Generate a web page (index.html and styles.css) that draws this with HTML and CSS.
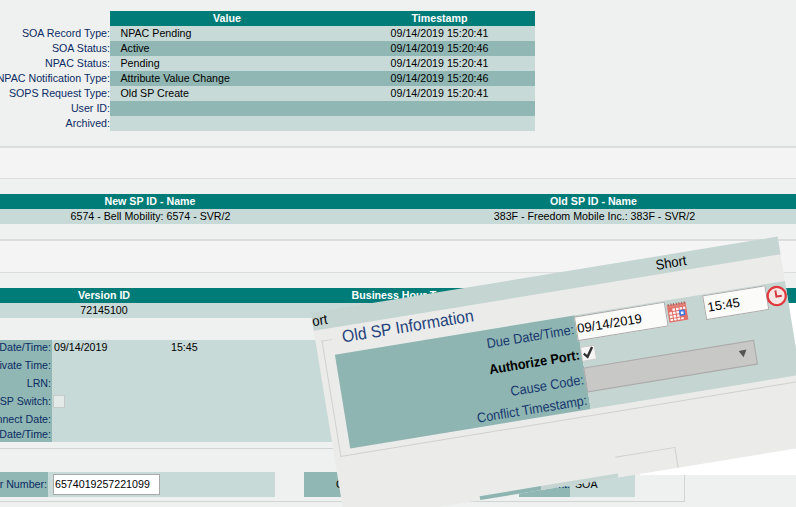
FILE: index.html
```html
<!DOCTYPE html>
<html lang="en">
<head>
<meta charset="utf-8">
<title>SOA Record</title>
<link rel="stylesheet" href="styles.css">
</head>
<body>
<main class="page">
  <section class="status">
    <div class="status-row head"><span></span><b>Value</b><b>Timestamp</b></div>
    <div class="status-row"><label>SOA Record Type:</label><span>NPAC Pending</span><time>09/14/2019 15:20:41</time></div>
    <div class="status-row alt"><label>SOA Status:</label><span>Active</span><time>09/14/2019 15:20:46</time></div>
    <div class="status-row"><label>NPAC Status:</label><span>Pending</span><time>09/14/2019 15:20:41</time></div>
    <div class="status-row alt"><label>NPAC Notification Type:</label><span>Attribute Value Change</span><time>09/14/2019 15:20:46</time></div>
    <div class="status-row"><label>SOPS Request Type:</label><span>Old SP Create</span><time>09/14/2019 15:20:41</time></div>
    <div class="status-row alt"><label>User ID:</label><span></span><time></time></div>
    <div class="status-row"><label>Archived:</label><span></span><time></time></div>
  </section>

  <div class="separator"></div>

  <section class="providers">
    <div class="pair head"><b>New SP ID - Name</b><b>Old SP ID - Name</b></div>
    <div class="pair names"><span>6574 - Bell Mobility: 6574 - SVR/2</span><span>383F - Freedom Mobile Inc.: 383F - SVR/2</span></div>
  </section>

  <div class="separator second"></div>

  <section class="version">
    <div class="version-row head"><b>Version ID</b><b class="hours">Business Hour Type</b></div>
    <div class="version-row"><span>72145100</span></div>
  </section>

  <section class="details">
    <div class="labels">
      <label>Date/Time:</label><label>ivate Time:</label><label>LRN:</label><label>SP Switch:</label><label>nnect Date:</label><label>Date/Time:</label>
    </div>
    <div class="values">
      <div class="when"><span>09/14/2019</span><span>15:45</span></div>
      <i class="box"></i>
    </div>
  </section>

  <section class="order">
    <label class="order-label">r Number:</label>
    <div class="order-field"><span class="input">6574019257221099</span></div>
    <div class="origin-label">O</div>
    <label class="source-label">Client:</label>
    <div class="source-value">SOA</div>
  </section>
</main>

<div class="backing"></div>
<aside class="panel">
  <div class="panel-head"><span>ort</span><span>Short</span></div>
  <div class="legend"><i></i><span>Old SP Information</span></div>
  <div class="form">
    <div class="form-row due">
      <label>Due Date/Time:</label>
      <div class="cell">
        <span class="field date">09/14/2019</span>
        <svg class="calendar" viewBox="0 0 20 20" width="20" height="20">
          <rect x=".5" y="2" width="19" height="17.5" fill="#e07068"/>
          <path d="M.5 2h19v3H.5z" fill="#e4837b"/>
          <path d="M2 .8v2.4M4.7 .8v2.4M7.4 .8v2.4M10.1 .8v2.4M12.8 .8v2.4M15.5 .8v2.4M18.2 .8v2.4" stroke="#9c625c"/>
          <path d="M5.4 6h2.6v2.4H5.4zM9 6h2.6v2.4H9zM12.6 6h2.6v2.4h-2.6zM16.2 6h2.2v2.4h-2.2zM1.8 9.4h2.6v2.4H1.8zM5.4 9.4h2.6v2.4H5.4zM9 9.4h2.6v2.4H9zM1.8 12.8h2.6v2.4H1.8zM5.4 12.8h2.6v2.4H5.4zM9 12.8h2.6v2.4H9zM1.8 16.2h2.6v2H1.8zM5.4 16.2h2.6v2H5.4zM9 16.2h2.6v2H9zM12.6 16.2h2.6v2h-2.6z" fill="#fff5f2"/>
          <rect x="12.4" y="9.6" width="4.2" height="4.2" fill="#fff" stroke="#4275e2" stroke-width="1.6"/>
        </svg>
        <span class="field time">15:45</span>
        <svg class="clock" viewBox="0 0 20 20" width="21" height="21">
          <circle cx="10" cy="10" r="8.7" fill="#f7e6e4" stroke="#e03a3e" stroke-width="2.2"/>
          <path d="M9.6 4.5v6h5.2" fill="none" stroke="#d2383d" stroke-width="1.9"/>
        </svg>
      </div>
    </div>
    <div class="form-row authorize">
      <label>Authorize Port:</label>
      <div class="cell"><svg class="check" viewBox="0 0 15 15" width="15" height="15"><rect x=".5" y=".5" width="14" height="14" fill="#f5f5f5" stroke="#cccac8"/><path d="M2.8 7.2l3.2 3.8 6-9" fill="none" stroke="#303030" stroke-width="2.4"/></svg></div>
    </div>
    <div class="form-row cause">
      <label>Cause Code:</label>
      <div class="cell"><span class="select"><svg viewBox="0 0 8 8" width="8" height="8"><path d="M0 .5h8L4 7.5z" fill="#555"/></svg></span></div>
    </div>
    <div class="form-row conflict"><label>Conflict Timestamp:</label><div class="cell"></div></div>
  </div>
  <div class="frame-base"></div>
  <div class="next-frame"></div>
  <div class="strips"><i></i><i></i></div>
</aside>
</body>
</html>
```
FILE: styles.css
```css
* { box-sizing: border-box; }
body {
  margin: 0;
  width: 796px;
  height: 507px;
  overflow: hidden;
  position: relative;
  background: #eff1f0;
  color: #000;
  font: 10.667px/15px "Liberation Sans", Arial, sans-serif;
  white-space: nowrap;
}
label { color: #0b2b63; }
.page { width: 796px; height: 507px; padding-top: 11px; overflow: hidden; }

.status-row { display: grid; grid-template-columns: 110px 234px 191px; height: 15px; }
.status-row label { display: flex; justify-content: flex-end; }
.status-row span, .status-row time { background: #c8dad7; }
.status-row span { padding-left: 10.5px; }
.status-row time { text-align: center; }
.status-row.alt span, .status-row.alt time { background: #90b7b3; }
.status-row.head b { background: #007c78; }
.status-row.head span { background: none; }
.head b { color: #fff; text-align: center; }

.separator {
  height: 33px;
  margin: 15px 0;
  background: #f4f4f4;
  border-top: 2px solid #dcdedd;
  border-bottom: 1px solid #dcdedd;
}
.separator.second { height: 34px; }

.pair { display: grid; grid-template-columns: 300px 496px; text-align: center; background: #c8dad7; }
.pair > :last-child { padding-left: 91px; }
.pair.names > :first-child { padding-left: 1px; }
.pair.names > :last-child { padding-left: 93px; }
.version-row { display: grid; grid-template-columns: 208px 1fr; height: 15px; text-align: center; background: #c8dad7; }
.pair.head, .version-row.head { background: #007c78; }
.version-row .hours { text-align: left; padding-left: 143.5px; }

.details { display: flex; height: 109px; margin-top: 22px; border-bottom: 1px solid #d3d5d4; }
.labels {
  width: 52px;
  height: 102px;
  display: grid;
  grid-template-columns: 52px;
  grid-template-rows: 16px 18px 18px 18px 18px 14px;
  background: #90b7b3;
  line-height: 18px;
}
.labels label { display: flex; justify-content: flex-end; padding-right: 1px; }
.labels label:first-child { line-height: 15px; }
.labels label:last-child { line-height: 13px; }
.values { width: 420px; height: 102px; padding-left: 1px; background: #c8dad7; }
.when { display: flex; padding-left: 1px; }
.when span:first-child { width: 117px; }
.box { display: block; width: 12px; height: 13px; margin-top: 40px; background: #e3eae8; border: 1px solid #c3cac8; }

.order {
  display: flex;
  width: 685px;
  height: 53px;
  padding-top: 23px;
  border: solid #d3d5d4;
  border-width: 0 1px 1px 0;
  line-height: 25px;
}
.order-label { display: flex; justify-content: flex-end; width: 48px; height: 25px; padding-right: 1px; background: #90b7b3; }
.order-field { width: 227px; height: 25px; padding: 2px 5px; background: #c8dad7; }
.input { display: block; width: 107px; height: 21px; padding-left: 1px; line-height: 19px; background: #fff; border: 1px solid #a9a9a9; }
.origin-label { width: 100px; height: 25px; margin: 0 115px 0 29px; padding-left: 32px; background: #90b7b3; }
.source-label { display: flex; justify-content: flex-end; width: 51px; height: 25px; background: #90b7b3; }
.source-value { width: 65px; height: 25px; padding-left: 5px; background: #c8dad7; }

.backing { position: absolute; left: 640px; top: 303px; width: 156px; height: 172px; background: #fff; }

.panel {
  position: absolute;
  left: 311px;
  top: 314px;
  width: 473px;
  height: 211px;
  background: #ebebea;
  transform: rotate(-9.3deg);
  transform-origin: 0 0;
  font-size: 13px;
}
.panel-head { display: flex; height: 18px; margin-top: -1px; line-height: 17px; background: #c4d5d2; }
.panel-head span { transform: scaleY(1.08); }
.panel-head span:first-child { width: 348px; }
.legend { display: flex; height: 26.5px; padding-left: 27px; line-height: 22px; font-size: 15.8px; color: #23427a; }
.legend span { height: 22px; transform: scaleY(1.08); }
.legend i { position: absolute; left: 6px; top: 28px; width: 11px; height: 118px; border: solid #d0d0ce; border-width: 1.3px 0 0 1.3px; }
.form { width: 456.5px; height: 95.5px; margin-left: 16.5px; background: linear-gradient(90deg, #8eb5b1 243.5px, #c4d5d2 243.5px); }
.form-row { display: flex; }
.form-row label { display: flex; justify-content: flex-end; align-items: center; width: 243.5px; padding-right: 1.5px; font-size: 12.7px; color: #18386f; transform: scaleY(1.08); }
.cell { display: flex; align-items: center; }
.due { height: 28px; }
.due .cell { align-items: flex-start; padding-top: 1px; }
.authorize { height: 24.5px; }
.authorize label { font-weight: bold; color: #000; }
.cause { height: 26px; }
.conflict { height: 17px; }
.field { height: 25px; padding-left: 1px; line-height: 23px; background: #fbfbf9; border: 1px solid #aaa; }
.date { width: 92px; }
.time { width: 64px; padding-left: 3px; }
.calendar { flex: none; margin: 2.5px 17px 0 1px; }
.clock { flex: none; margin: 2px 0 0 -.5px; }
.select { display: flex; justify-content: flex-end; align-items: center; width: 173px; height: 25px; padding-right: 8px; background: #c8c8c6; border: 1px solid #aaa; }
.frame-base { height: 7px; width: 467px; margin-left: 6px; border-bottom: 1.3px solid #d0d0ce; }
.next-frame { width: 61px; height: 21px; margin: 43.5px 0 0 277px; border: solid #d0d0ce; border-width: 1.4px 1.4px 0 0; }
.strips { position: absolute; left: 137px; top: 207px; display: flex; height: 4px; }
.strips i { width: 62px; background: #8eb5b1; }
.strips i + i { width: 78px; background: #c4d5d2; }
```
